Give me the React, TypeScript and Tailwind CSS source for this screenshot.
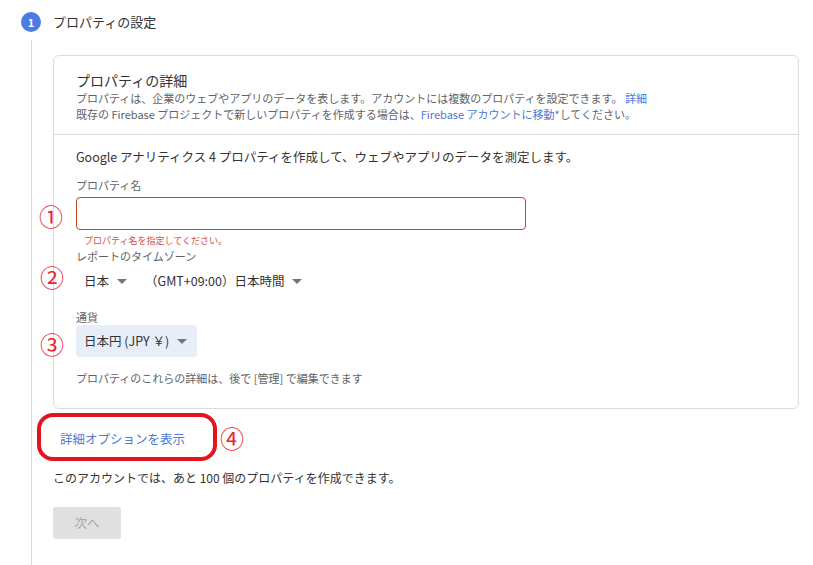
import React from 'react';

const font = { fontFamily: '"Noto Sans CJK JP", "Liberation Sans", sans-serif' };

const Caret = () => (
    <svg width="10" height="5" viewBox="0 0 10 5" className="ml-[8px] inline-block">
        <path d="M0 0 L10 0 L5 5 Z" fill="#757575" />
    </svg>
);

const Mark = ({ children, className }: { children: React.ReactNode; className: string }) => (
    <span className={`absolute text-[24px] leading-none text-[#e8242c] ${className}`}>{children}</span>
);

const App = () => {
    return (
        <div className="relative w-[813px] h-[565px] bg-white text-[#333] overflow-hidden" style={font}>
            {/* step header */}
            <div className="flex items-center gap-[12px] pl-[21px] pt-[12px]">
                <div className="w-[20px] h-[20px] rounded-full bg-[#4a7ce2] text-white text-[11px] font-bold flex items-center justify-center">
                    1
                </div>
                <span className="text-[13px] leading-[20px] text-[#333]">プロパティの設定</span>
            </div>

            <div className="ml-[31px] mt-[8px] border-l border-[#dadce0] pl-[21px] pt-[15px] h-[600px]">
                {/* card */}
                <div className="w-[746px] rounded-[6px] border border-[#dadce0]">
                    <div className="px-[22px] pt-[14px] pb-[12px] border-b border-[#dadce0]">
                        <div className="text-[14px] leading-[20px] text-[#333]">プロパティの詳細</div>
                        <div className="text-[11px] leading-[16px] text-[#5f6368]">
                            プロパティは、企業のウェブやアプリのデータを表します。アカウントには複数のプロパティを設定できます。{' '}
                            <span className="text-[#4d7ad6]">詳細</span>
                        </div>
                        <div className="text-[11px] leading-[16px] text-[#5f6368]">
                            既存の Firebase プロジェクトで新しいプロパティを作成する場合は、
                            <span className="text-[#4d7ad6]">Firebase アカウントに移動*</span>してください。
                        </div>
                    </div>

                    <div className="px-[22px] pt-[13px] pb-[22px]">
                        <div className="text-[12.5px] leading-[18px] text-[#333]">
                            Google アナリティクス 4 プロパティを作成して、ウェブやアプリのデータを測定します。
                        </div>

                        <div className="mt-[11px] text-[11px] leading-[16px] text-[#5f6368]">プロパティ名</div>
                        <div className="mt-[4px] w-[450px] h-[33px] rounded-[4px] border border-[#c4461f]" />
                        <div className="mt-[5px] pl-[8px] text-[9px] leading-[12px] text-[#d0513a]">
                            プロパティ名を指定してください。
                        </div>

                        <div className="mt-[1px] text-[11px] leading-[16px] text-[#5f6368]">レポートのタイムゾーン</div>
                        <div className="mt-[5px] h-[24px] flex items-center text-[12.5px] text-[#333]">
                            <span className="pl-[8px] flex items-center">
                                日本
                                <Caret />
                            </span>
                            <span className="ml-[18px] flex items-center">
                                （GMT+09:00）日本時間
                                <Caret />
                            </span>
                        </div>

                        <div className="mt-[16px] text-[11px] leading-[16px] text-[#5f6368]">通貨</div>
                        <div className="w-[121px] h-[32px] rounded-[4px] bg-[#e8eef9] flex items-center pl-[8px] text-[12.5px] text-[#333]">
                            日本円 (JPY ￥)
                            <Caret />
                        </div>

                        <div className="mt-[13px] text-[11px] leading-[16px] text-[#5f6368]">
                            プロパティのこれらの詳細は、後で [管理] で編集できます
                        </div>
                    </div>
                </div>

                <div className="mt-[21px] ml-[7px] text-[12.5px] leading-[18px] text-[#4d7ad6]">詳細オプションを表示</div>

                <div className="mt-[21px] text-[12px] leading-[18px] text-[#333]">
                    このアカウントでは、あと 100 個のプロパティを作成できます。
                </div>

                <button className="mt-[20px] w-[68px] h-[32px] rounded-[3px] bg-[#e0e0e0] text-[12.5px] text-[#a8a8a8]">
                    次へ
                </button>
            </div>

            {/* annotations */}
            <Mark className="left-[39px] top-[204px]">①</Mark>
            <Mark className="left-[40px] top-[265px]">②</Mark>
            <Mark className="left-[40px] top-[332px]">③</Mark>
            <div className="absolute left-[37px] top-[413px] w-[180px] h-[48px] rounded-[16px] border-[4px] border-[#e3141f]" />
            <Mark className="left-[220px] top-[426px]">④</Mark>
        </div>
    );
};

export default App;
